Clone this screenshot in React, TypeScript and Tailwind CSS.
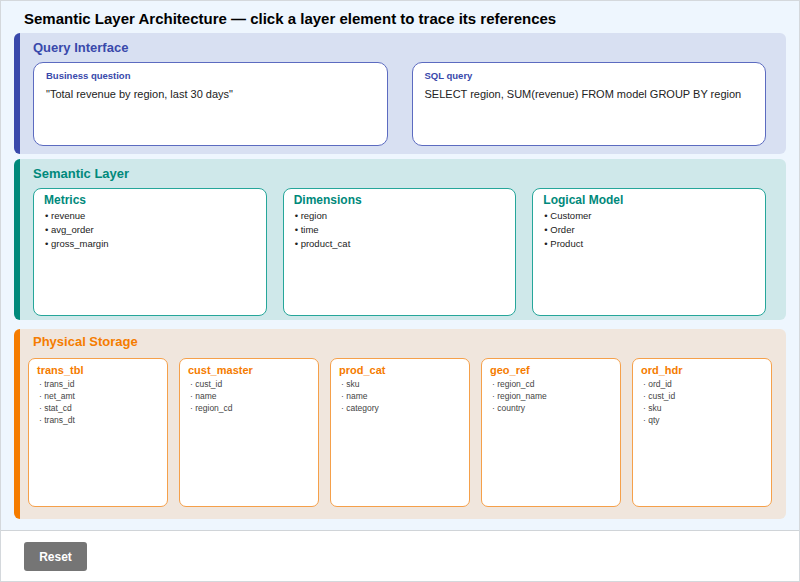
import React from "react";

const F = { fontFamily: '"Liberation Sans", Arial, sans-serif' };

export default function App() {
  const sem = [
    { t: "Metrics", i: ["revenue", "avg_order", "gross_margin"] },
    { t: "Dimensions", i: ["region", "time", "product_cat"] },
    { t: "Logical Model", i: ["Customer", "Order", "Product"] },
  ];
  const phys = [
    { t: "trans_tbl", i: ["trans_id", "net_amt", "stat_cd", "trans_dt"] },
    { t: "cust_master", i: ["cust_id", "name", "region_cd"] },
    { t: "prod_cat", i: ["sku", "name", "category"] },
    { t: "geo_ref", i: ["region_cd", "region_name", "country"] },
    { t: "ord_hdr", i: ["ord_id", "cust_id", "sku", "qty"] },
  ];
  return (
    <div style={F} className="w-[800px] h-[582px] border border-[#d4d8dc] bg-white flex flex-col">
      <div className="bg-[#eef6fe] h-[530px] flex flex-col px-[13px] border-b border-[#d0d4d8]">
        <div className="h-[32px] pt-[7px] pl-[10px] text-[15px] font-bold text-black">
          Semantic Layer Architecture — click a layer element to trace its references
        </div>
        <div className="h-[121px] bg-[#d8e0f2] rounded-[6px] border-l-[6px] border-[#3949ab] pl-[13px] pr-[20px] pt-[4px]">
          <div className="text-[13px] font-bold text-[#3949ab] h-[25px] leading-[22px]">Query Interface</div>
          <div className="flex gap-[24px]">
            {[
              ["Business question", '"Total revenue by region, last 30 days"'],
              ["SQL query", "SELECT region, SUM(revenue) FROM model GROUP BY region"],
            ].map(([a, b]) => (
              <div key={a} className="flex-1 h-[84px] bg-white border-[1.5px] border-[#5c6bc0] rounded-[10px] px-[12px] pt-[6px]">
                <div className="text-[9.5px] font-bold text-[#3949ab]">{a}</div>
                <div className="text-[11px] text-[#222] mt-[3px]">{b}</div>
              </div>
            ))}
          </div>
        </div>
        <div className="mt-[5px] h-[161px] bg-[#cfe8ea] rounded-[6px] border-l-[6px] border-[#00897b] pl-[13px] pr-[20px] pt-[4px]">
          <div className="text-[13px] font-bold text-[#00897b] h-[25px] leading-[22px]">Semantic Layer</div>
          <div className="flex gap-[16px]">
            {sem.map((c) => (
              <div key={c.t} className="flex-1 h-[128px] bg-white border-[1.5px] border-[#26a69a] rounded-[8px] px-[10px] pt-[3px]">
                <div className="text-[12px] font-bold text-[#00897b] leading-[17px]">{c.t}</div>
                {c.i.map((x) => (
                  <div key={x} className="text-[9.5px] text-[#222] leading-[14px] pl-[1px]">• {x}</div>
                ))}
              </div>
            ))}
          </div>
        </div>
        <div className="mt-[9px] h-[190px] bg-[#f0e6dd] rounded-[6px] border-l-[6px] border-[#f57c00] pl-[8px] pr-[14px] pt-[3px]">
          <div className="text-[13px] font-bold text-[#f57c00] h-[26px] leading-[20px] pl-[5px]">Physical Storage</div>
          <div className="flex gap-[11px]">
            {phys.map((c) => (
              <div key={c.t} className="flex-1 h-[149px] bg-white border border-[#f5a04a] rounded-[7px] px-[8px] pt-[4px]">
                <div className="text-[11px] font-bold text-[#f57c00] leading-[15px]">{c.t}</div>
                {c.i.map((x) => (
                  <div key={x} className="text-[8.5px] text-[#444] leading-[12px] pl-[2px]">· {x}</div>
                ))}
              </div>
            ))}
          </div>
        </div>
      </div>
      <div className="flex-1 pl-[23px] pt-[11px]">
        <button className="w-[63px] h-[29px] bg-[#757575] rounded-[3px] text-white text-[12px] font-bold">Reset</button>
      </div>
    </div>
  );
}
